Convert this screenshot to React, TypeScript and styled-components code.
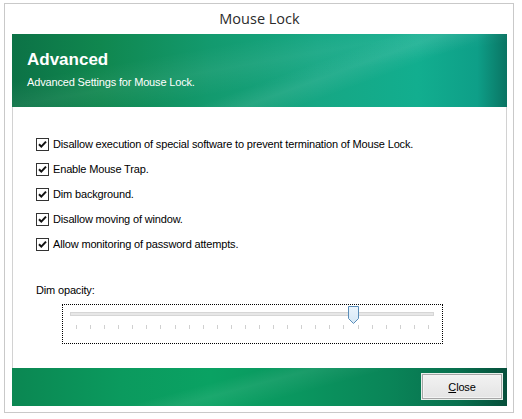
import React from "react";
import styled, { createGlobalStyle } from "styled-components";

const GlobalStyle = createGlobalStyle`
  html, body {
    margin: 0;
    padding: 0;
    background: #ffffff;
  }
  body {
    font-family: "Liberation Sans", Arial, sans-serif;
    font-size: 11px;
    letter-spacing: -0.16px;
    color: #000;
  }
`;

const options = [
  "Disallow execution of special software to prevent termination of Mouse Lock.",
  "Enable Mouse Trap.",
  "Dim background.",
  "Disallow moving of window.",
  "Allow monitoring of password attempts.",
];

const TICKS = 26;
const SLIDER_VALUE = 0.785;

const ScWindow = styled.div`
  margin: 3px 0 0 4px;
  width: 510px;
  height: 410px;
  box-sizing: border-box;
  border: 1px solid #c9c9c9;
  background: #ffffff;
  display: flex;
  flex-direction: column;
  padding: 0 6px 6px 7px;
`;

const ScTitleBar = styled.div`
  height: 30px;
  display: flex;
  align-items: center;
  justify-content: center;
  font-family: "Open Sans", "Noto Sans", sans-serif;
  font-size: 14.5px;
  letter-spacing: 0;
  color: #2b2b2b;
  padding-bottom: 1px;
  box-sizing: border-box;
`;

const ScClient = styled.div`
  flex: 1;
  display: flex;
  flex-direction: column;
`;

const ScBanner = styled.div`
  height: 73px;
  box-sizing: border-box;
  padding: 16px 0 0 15px;
  color: #ffffff;
  background:
    linear-gradient(160deg, rgba(255, 255, 255, 0) 55%, rgba(255, 255, 255, 0.08) 62%, rgba(255, 255, 255, 0) 70%),
    linear-gradient(170deg, rgba(255, 255, 255, 0) 30%, rgba(255, 255, 255, 0.06) 45%, rgba(255, 255, 255, 0) 60%),
    linear-gradient(90deg, #0c7246 0%, #10874f 18%, #139a6e 40%, #16a784 62%, #12ae8f 82%, #0e9f88 94%, #0a7463 100%);
`;

const ScBannerTitle = styled.div`
  font-size: 17px;
  font-weight: bold;
  letter-spacing: 0;
  line-height: 20px;
`;

const ScBannerSub = styled.div`
  margin-top: 6px;
  font-size: 11px;
  line-height: 13px;
`;

const ScBody = styled.div`
  flex: 1;
  border-left: 1px solid #d2d2d2;
  border-right: 1px solid #d2d2d2;
  padding: 31px 0 0 23px;
  display: flex;
  flex-direction: column;
`;

const ScOptionList = styled.div`
  display: flex;
  flex-direction: column;
  gap: 12px;
`;

const ScOption = styled.label`
  display: flex;
  align-items: center;
  gap: 4px;
  height: 13px;
  line-height: 13px;
  white-space: nowrap;
`;

const ScBox = styled.span`
  width: 13px;
  height: 13px;
  box-sizing: border-box;
  border: 1px solid #333333;
  background: #ffffff;
  display: flex;
  align-items: center;
  justify-content: center;
  flex: none;
`;

const ScLabel = styled.div`
  margin-top: 33px;
  line-height: 13px;
`;

const ScSlider = styled.div`
  margin: 7px 0 0 26px;
  width: 381px;
  height: 40px;
  box-sizing: border-box;
  border: 1px dotted #000000;
  position: relative;
`;

const ScTrack = styled.div`
  position: absolute;
  left: 7px;
  right: 8px;
  top: 7px;
  height: 4px;
  box-sizing: border-box;
  background: #e7e7e7;
  border: 1px solid #d6d6d6;
`;

const ScTicks = styled.div`
  position: absolute;
  left: 13px;
  right: 13px;
  top: 20px;
  height: 5px;
  display: flex;
  justify-content: space-between;
`;

const ScTick = styled.span`
  width: 1px;
  height: 4px;
  background: #d0d0d0;
`;

const ScThumb = styled.svg`
  position: absolute;
  top: 1px;
`;

const ScFooter = styled.div`
  height: 38px;
  box-sizing: border-box;
  display: flex;
  justify-content: flex-end;
  align-items: flex-start;
  padding: 6px 5px 0 0;
  background:
    linear-gradient(165deg, rgba(255, 255, 255, 0) 40%, rgba(255, 255, 255, 0.07) 48%, rgba(255, 255, 255, 0) 60%),
    linear-gradient(90deg, #0b8752 0%, #0b9a5e 22%, #0aa263 40%, #0a965f 58%, #0a8558 76%, #08704e 90%, #064f3b 100%);
`;

const ScButton = styled.button`
  width: 80px;
  height: 25px;
  box-sizing: border-box;
  border: 1px solid #a6a6a6;
  box-shadow: 0 0 0 1px #f4f4f4 inset;
  outline: 1px solid #e9f0ec;
  background: linear-gradient(#f2f2f2, #e4e4e4);
  font-family: "Liberation Sans", Arial, sans-serif;
  font-size: 11px;
  letter-spacing: -0.16px;
  color: #000;
  padding: 0;

  u {
    text-decoration: underline;
  }
`;

const Check = () => (
  <svg width="11" height="11" viewBox="0 0 11 11">
    <path d="M2 5.2 L4.3 7.6 L9 2.6" fill="none" stroke="#111" strokeWidth="2" />
  </svg>
);

const Thumb = ({ left }: { left: number }) => (
  <ScThumb width="11" height="18" viewBox="0 0 11 18" style={{ left }}>
    <defs>
      <linearGradient id="thumbFill" x1="0" y1="0" x2="0" y2="1">
        <stop offset="0" stopColor="#eaf4fc" />
        <stop offset="1" stopColor="#d6e8f6" />
      </linearGradient>
    </defs>
    <path d="M0.5 0.5 H10.5 V12.5 L5.5 17.5 L0.5 12.5 Z" fill="url(#thumbFill)" stroke="#5a8db8" />
  </ScThumb>
);

export default function App() {
  const trackStart = 13;
  const trackEnd = 381 - 2 - 13;
  const thumbCenter = trackStart + (trackEnd - trackStart) * SLIDER_VALUE;

  return (
    <>
      <GlobalStyle />
      <ScWindow>
        <ScTitleBar>Mouse Lock</ScTitleBar>
        <ScClient>
          <ScBanner>
            <ScBannerTitle>Advanced</ScBannerTitle>
            <ScBannerSub>Advanced Settings for Mouse Lock.</ScBannerSub>
          </ScBanner>
          <ScBody>
            <ScOptionList>
              {options.map((text) => (
                <ScOption key={text}>
                  <ScBox>
                    <Check />
                  </ScBox>
                  {text}
                </ScOption>
              ))}
            </ScOptionList>
            <ScLabel>Dim opacity:</ScLabel>
            <ScSlider>
              <ScTrack />
              <ScTicks>
                {Array.from({ length: TICKS }).map((_, i) => (
                  <ScTick key={i} />
                ))}
              </ScTicks>
              <Thumb left={Math.round(thumbCenter - 5.5)} />
            </ScSlider>
          </ScBody>
          <ScFooter>
            <ScButton>
              <u>C</u>lose
            </ScButton>
          </ScFooter>
        </ScClient>
      </ScWindow>
    </>
  );
}
